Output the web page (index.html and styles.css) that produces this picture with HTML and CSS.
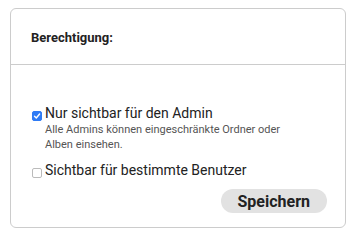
FILE: index.html
```html
<!DOCTYPE html>
<html lang="de">
  <head>
    <meta charset="utf-8" />
    <title>Berechtigung</title>
    <link rel="stylesheet" href="styles.css">
  </head>
  <body>
    <div class="card">
      <div class="card-header">Berechtigung:</div>
      <div class="card-body">
        <label class="option">
          <input type="checkbox" checked />
          <span class="option-text">
            <span class="option-title">Nur sichtbar für den Admin</span>
            <span class="option-hint">Alle Admins können eingeschränkte Ordner oder Alben einsehen.</span>
          </span>
        </label>
        <label class="option">
          <input type="checkbox" />
          <span class="option-text">
            <span class="option-title">Sichtbar für bestimmte Benutzer</span>
          </span>
        </label>
        <div class="actions">
          <button class="btn-save">Speichern</button>
        </div>
      </div>
    </div>
  </body>
</html>
```

FILE: styles.css
```css
html {
  background-color: #FFF;
}

body {
  margin: 0;
  padding: 8px 8px 0 10px;
  font-family: Roboto, "Liberation Sans", sans-serif;
  color: #222;
}

.card {
  width: 336px;
  height: 220px;
  box-sizing: border-box;
  border: 1px solid #CCC;
  border-radius: 6px;
  display: flex;
  flex-direction: column;
}

.card-header {
  height: 57px;
  box-sizing: border-box;
  padding: 2px 20px 0 20px;
  display: flex;
  align-items: center;
  border-bottom: 1px solid #CCC;
  font-size: 13px;
  font-weight: bold;
}

.card-body {
  flex: 1;
  padding: 40px 18px 0 21px;
  display: flex;
  flex-direction: column;
}

.option {
  display: flex;
  align-items: flex-start;
  gap: 3px;
  margin-bottom: 10px;
}

.option input {
  appearance: none;
  -webkit-appearance: none;
  margin: 6px 0 0 0;
  width: 10px;
  height: 10px;
  box-sizing: border-box;
  border: 1px solid #BBB;
  border-radius: 2px;
  background: #FFF;
  flex: none;
}

.option input:checked {
  border-color: #2F7BF5;
  background: #2F7BF5 url("data:image/svg+xml;utf8,<svg xmlns='http://www.w3.org/2000/svg' viewBox='0 0 10 10'><path d='M2.5 5.2 4.3 7 7.6 3' fill='none' stroke='white' stroke-width='1.4' stroke-linecap='round' stroke-linejoin='round'/></svg>") center / 10px 10px no-repeat;
}

.option-text {
  display: flex;
  flex-direction: column;
}

.option-title {
  font-size: 14px;
  line-height: 17px;
}

.option-hint {
  font-size: 11px;
  line-height: 15px;
  color: #555;
  width: 250px;
}

.actions {
  margin-top: auto;
  display: flex;
  justify-content: flex-end;
  padding-bottom: 14px;
}

.btn-save {
  font-family: Roboto, "Liberation Sans", sans-serif;
  font-size: 16px;
  font-weight: bold;
  color: #222;
  background: #E2E2E2;
  border: none;
  border-radius: 13px;
  height: 24px;
  padding: 0 17px;
}
```
